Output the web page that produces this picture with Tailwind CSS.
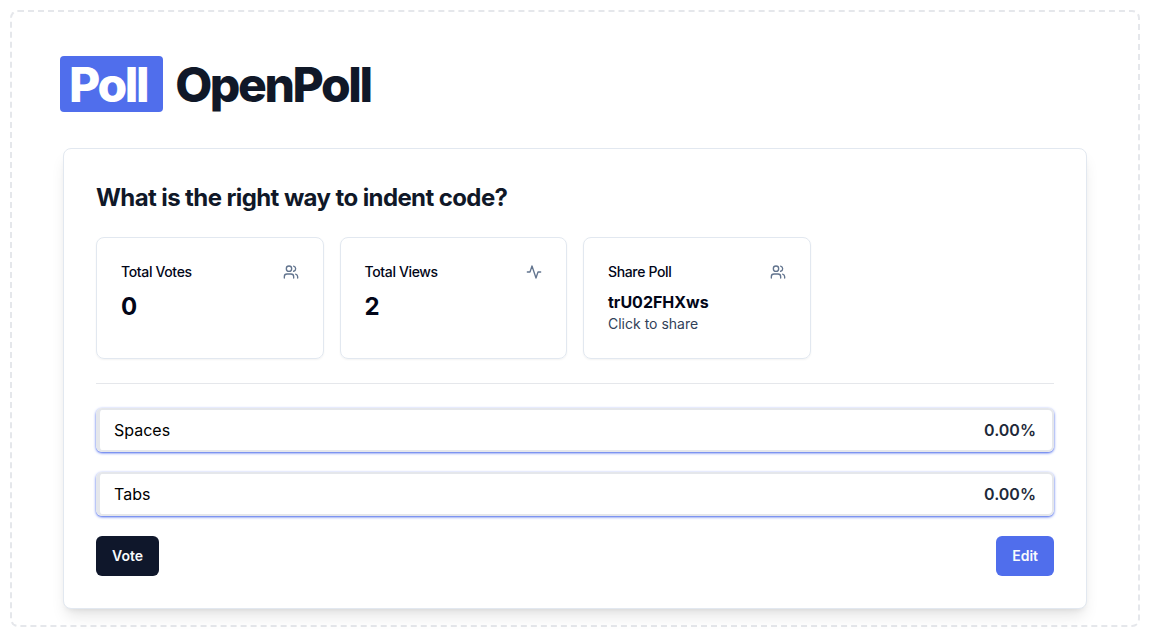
<!DOCTYPE html>
<html lang="en">
<head>
<meta charset="utf-8">
<title>OpenPoll</title>
<script src="https://cdn.jsdelivr.net/npm/@tailwindcss/browser@4"></script>
</head>
<body class="bg-white p-[10px] font-['Inter',sans-serif] text-slate-950">
<div class="rounded-lg border-2 border-dashed border-[#e5e7eb] px-12 pt-11 pb-4">
  <h1 class="flex h-14 items-start text-5xl leading-[58px] font-extrabold tracking-tighter text-gray-900">
    <span class="mr-3 h-14 rounded bg-[#506eec] pr-4 pl-[9px] text-white">Poll</span>
    <span>OpenPoll</span>
  </h1>
  <main class="mx-auto mt-9 max-w-5xl rounded-lg border border-slate-200 bg-white p-8 shadow-lg">
    <h2 class="text-2xl leading-[34px] font-bold tracking-tight text-gray-900">What is the right way to indent code?</h2>
    <div class="mt-[22px] grid grid-cols-4 gap-4">
      <section class="rounded-lg border border-slate-200 p-6 shadow-xs">
        <div class="flex items-center justify-between pb-2">
          <h3 class="text-sm font-medium tracking-tight">Total Votes</h3>
          <svg class="size-4 text-slate-500" viewBox="0 0 24 24" fill="none" stroke="currentColor" stroke-width="2" stroke-linecap="round" stroke-linejoin="round"><path d="M16 21v-2a4 4 0 0 0-4-4H6a4 4 0 0 0-4 4v2"/><circle cx="9" cy="7" r="4"/><path d="M22 21v-2a4 4 0 0 0-3-3.87M16 3.13a4 4 0 0 1 0 7.75"/></svg>
        </div>
        <p class="text-2xl leading-[34px] font-bold">0</p>
      </section>
      <section class="rounded-lg border border-slate-200 p-6 shadow-xs">
        <div class="flex items-center justify-between pb-2">
          <h3 class="text-sm font-medium tracking-tight">Total Views</h3>
          <svg class="size-4 text-slate-500" viewBox="0 0 24 24" fill="none" stroke="currentColor" stroke-width="2" stroke-linecap="round" stroke-linejoin="round"><path d="M22 12h-4l-3 9L9 3l-3 9H2"/></svg>
        </div>
        <p class="text-2xl leading-[34px] font-bold">2</p>
      </section>
      <section class="rounded-lg border border-slate-200 p-6 shadow-xs">
        <div class="flex items-center justify-between pb-2">
          <h3 class="text-sm font-medium tracking-tight">Share Poll</h3>
          <svg class="size-4 text-slate-500" viewBox="0 0 24 24" fill="none" stroke="currentColor" stroke-width="2" stroke-linecap="round" stroke-linejoin="round"><path d="M16 21v-2a4 4 0 0 0-4-4H6a4 4 0 0 0-4 4v2"/><circle cx="9" cy="7" r="4"/><path d="M22 21v-2a4 4 0 0 0-3-3.87M16 3.13a4 4 0 0 1 0 7.75"/></svg>
        </div>
        <p class="text-base font-bold">trU02FHXws</p>
        <p class="text-sm text-slate-700">Click to share</p>
      </section>
    </div>
    <hr class="my-6 border-gray-200">
    <div class="flex flex-col gap-5">
      <button type="button" class="flex items-center justify-between rounded-md border-2 border-l-4 border-gray-200 py-2 pr-4 pl-[14px] text-black shadow-[0_1px_3px_#506eec,0_1px_2px_-1px_#506eec]"><span>Spaces</span><span class="font-semibold text-gray-800">0.00%</span></button>
      <button type="button" class="flex items-center justify-between rounded-md border-2 border-l-4 border-gray-200 py-2 pr-4 pl-[14px] text-black shadow-[0_1px_3px_#506eec,0_1px_2px_-1px_#506eec]"><span>Tabs</span><span class="font-semibold text-gray-800">0.00%</span></button>
    </div>
    <div class="mt-5 flex justify-between text-sm font-semibold">
      <button type="button" class="h-10 rounded-md bg-slate-900 px-4 text-slate-50">Vote</button>
      <button type="button" class="h-10 rounded-md bg-[#506eec] px-4 text-slate-50">Edit</button>
    </div>
  </main>
</div>
</body>
</html>
